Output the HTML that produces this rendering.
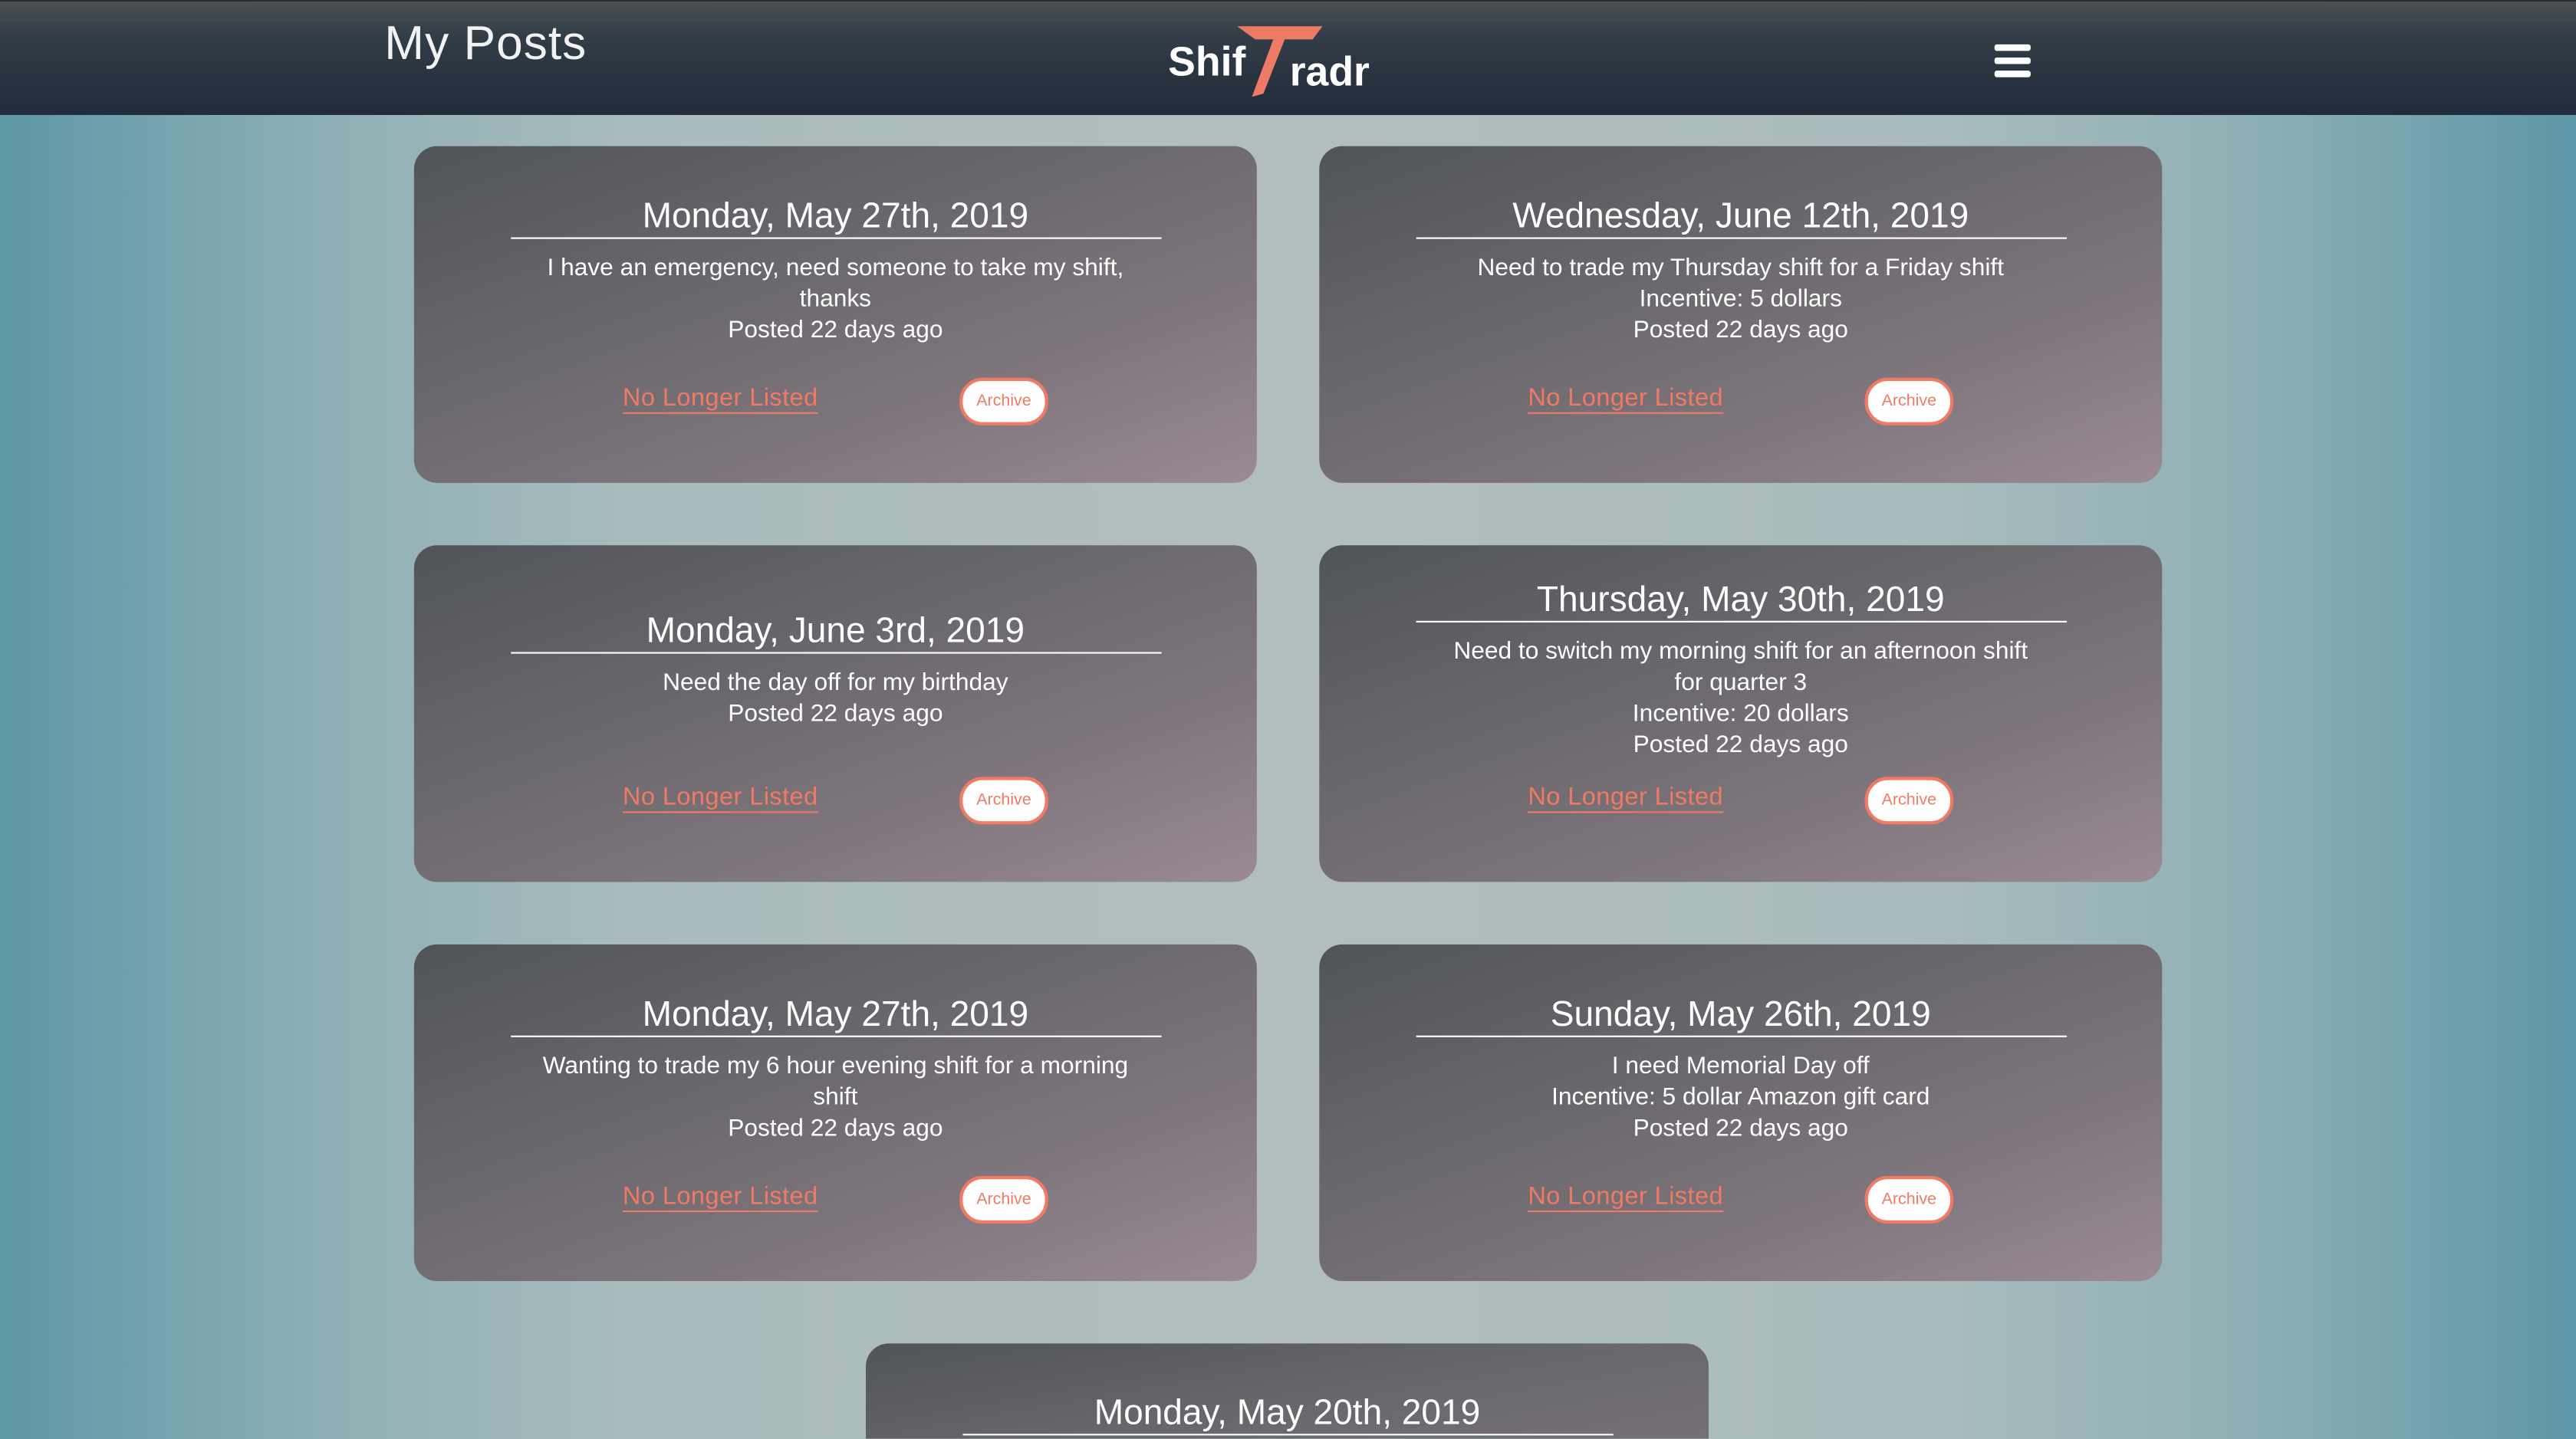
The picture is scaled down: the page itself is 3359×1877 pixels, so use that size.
<!DOCTYPE html>
<html><head><meta charset="utf-8"><style>
html,body{margin:0;padding:0;width:3359px;height:1877px;overflow:hidden;}
#o{position:relative;width:3359px;height:1877px;overflow:hidden;background:linear-gradient(to right,#5e97a8 0%,#8fb0b6 13%,#a9bcbd 25%,#b2bebd 50%,#a9bcbd 75%,#8fb0b6 87%,#5e97a8 100%);font-family:"Liberation Sans",sans-serif;}
#w{position:absolute;left:0;top:0;width:1568px;height:876px;overflow:hidden;transform:scale(2.1423);transform-origin:0 0;}
.hdr{position:absolute;left:0;top:0;width:1568px;height:70px;background:linear-gradient(#4a5052 0%,#323d47 30%,#222b3b 100%);border-top:1px solid #2a2a2a;box-sizing:border-box;}
.mp{position:absolute;left:234px;top:10px;font-size:29px;color:#f2f2f2;letter-spacing:.5px;}
.hb{position:absolute;left:1214px;width:22px;height:3.6px;background:#fff;border-radius:1.5px;}
.card{position:absolute;width:513px;height:205px;border-radius:14px;background:linear-gradient(160deg,#505459 0%,#6a686d 40%,#7f767d 70%,#9a8a93 100%);color:#fff;}
.c{position:absolute;left:0;right:0;top:76px;transform:translateY(-50%);text-align:center;}
.t{width:396px;margin:0 auto;border-bottom:1.2px solid #fff;font-size:21.5px;line-height:26px;padding-bottom:0;}
.b{width:380px;margin:9px auto 0;font-size:14.8px;line-height:19px;}
.lk{position:absolute;left:127px;top:146px;font-size:15.2px;color:#f07a63;border-bottom:1.3px solid #f07a63;line-height:16px;letter-spacing:.2px;}
.ar{position:absolute;left:332px;top:141px;width:50px;height:25px;border:2px solid #f07a63;border-radius:14px;background:#fff;color:#f07a63;font-size:10px;text-align:center;line-height:25px;}
</style></head><body><div id="o"><div id="w">
<div class="hdr">
<div class="mp">My Posts</div>
<svg style="position:absolute;left:708px;top:12px" width="140" height="50" viewBox="0 0 140 50">
<text x="3" y="33" font-family="Liberation Sans,sans-serif" font-weight="bold" font-size="25" fill="#fff">Shif</text>
<polygon points="45,3 97,3 91,11 74,11 61,44 54,46 67,11 56,11" fill="#ee7964"/>
<text x="77" y="39" font-family="Liberation Sans,sans-serif" font-weight="bold" font-size="25" fill="#fff">radr</text>
</svg>
<div class="hb" style="top:26px"></div><div class="hb" style="top:34px"></div><div class="hb" style="top:42px"></div>
</div>

<div class="card" style="left:252px;top:89px"><div class="c"><div class="t">Monday, May 27th, 2019</div><div class="b">I have an emergency, need someone to take my shift, thanks<br>Posted 22 days ago</div></div><div class="lk">No Longer Listed</div><div class="ar">Archive</div></div>
<div class="card" style="left:803px;top:89px"><div class="c"><div class="t">Wednesday, June 12th, 2019</div><div class="b">Need to trade my Thursday shift for a Friday shift<br>Incentive: 5 dollars<br>Posted 22 days ago</div></div><div class="lk">No Longer Listed</div><div class="ar">Archive</div></div>
<div class="card" style="left:252px;top:332px"><div class="c"><div class="t">Monday, June 3rd, 2019</div><div class="b">Need the day off for my birthday<br>Posted 22 days ago</div></div><div class="lk">No Longer Listed</div><div class="ar">Archive</div></div>
<div class="card" style="left:803px;top:332px"><div class="c"><div class="t">Thursday, May 30th, 2019</div><div class="b">Need to switch my morning shift for an afternoon shift<br>for quarter 3<br>Incentive: 20 dollars<br>Posted 22 days ago</div></div><div class="lk">No Longer Listed</div><div class="ar">Archive</div></div>
<div class="card" style="left:252px;top:575px"><div class="c"><div class="t">Monday, May 27th, 2019</div><div class="b">Wanting to trade my 6 hour evening shift for a morning<br>shift<br>Posted 22 days ago</div></div><div class="lk">No Longer Listed</div><div class="ar">Archive</div></div>
<div class="card" style="left:803px;top:575px"><div class="c"><div class="t">Sunday, May 26th, 2019</div><div class="b">I need Memorial Day off<br>Incentive: 5 dollar Amazon gift card<br>Posted 22 days ago</div></div><div class="lk">No Longer Listed</div><div class="ar">Archive</div></div>
<div class="card" style="left:527px;top:818px;height:58px;border-radius:14px 14px 0 0;background:linear-gradient(170deg,#505459 0%,#6a686d 60%,#757077 100%)"><div style="position:absolute;left:0;right:0;top:29px;text-align:center"><div class="t">Monday, May 20th, 2019</div></div></div>
</div></div></body></html>
